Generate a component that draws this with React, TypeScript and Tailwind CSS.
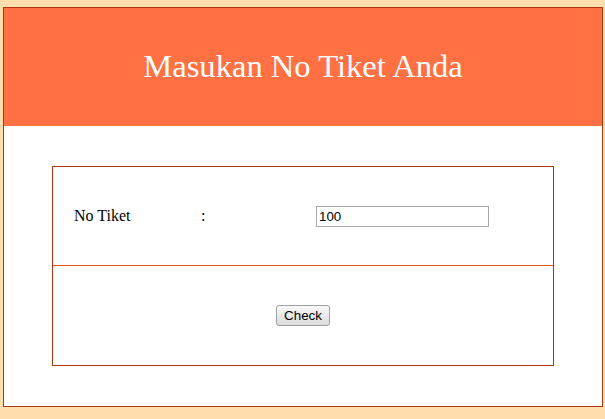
import { useState } from "react";

const App = () => {
  const [ticket, setTicket] = useState("100");

  return (
    <div className="min-h-screen bg-[#ffdead] pl-[3px] pt-[7px] font-['Liberation_Serif',serif]">
      <div className="w-[600px] h-[400px] border border-[#a8360e] bg-white flex flex-col">
        <div className="h-[118px] bg-[#ff7043] flex items-center justify-center">
          <h1 className="text-[32.6px] leading-none text-white -mt-[2px]">Masukan No Tiket Anda</h1>
        </div>
        <div className="pt-[40px] pl-[48px]">
          <div className="w-[502px] h-[200px] border border-[#a8360e] flex flex-col">
            <div className="h-[99px] flex items-center pl-[21px] text-[16px] text-black border-b border-[#e8501c]">
              <span className="w-[127px]">No Tiket</span>
              <span className="w-[115px]">:</span>
              <input
                value={ticket}
                onChange={e => setTicket(e.target.value)}
                className="w-[173px] h-[21px] border border-[#a9a9a9] px-[2px] text-[13.33px] font-['Liberation_Sans',sans-serif] text-black outline-none"
              />
            </div>
            <div className="flex-1 flex items-center justify-center">
              <button className="w-[54px] h-[21px] border border-[#a0a0a0] rounded-[3px] bg-gradient-to-b from-[#f8f8f8] to-[#dcdcdc] text-[13.33px] font-['Liberation_Sans',sans-serif] text-black leading-none">
                Check
              </button>
            </div>
          </div>
        </div>
      </div>
    </div>
  );
};

export default App;
